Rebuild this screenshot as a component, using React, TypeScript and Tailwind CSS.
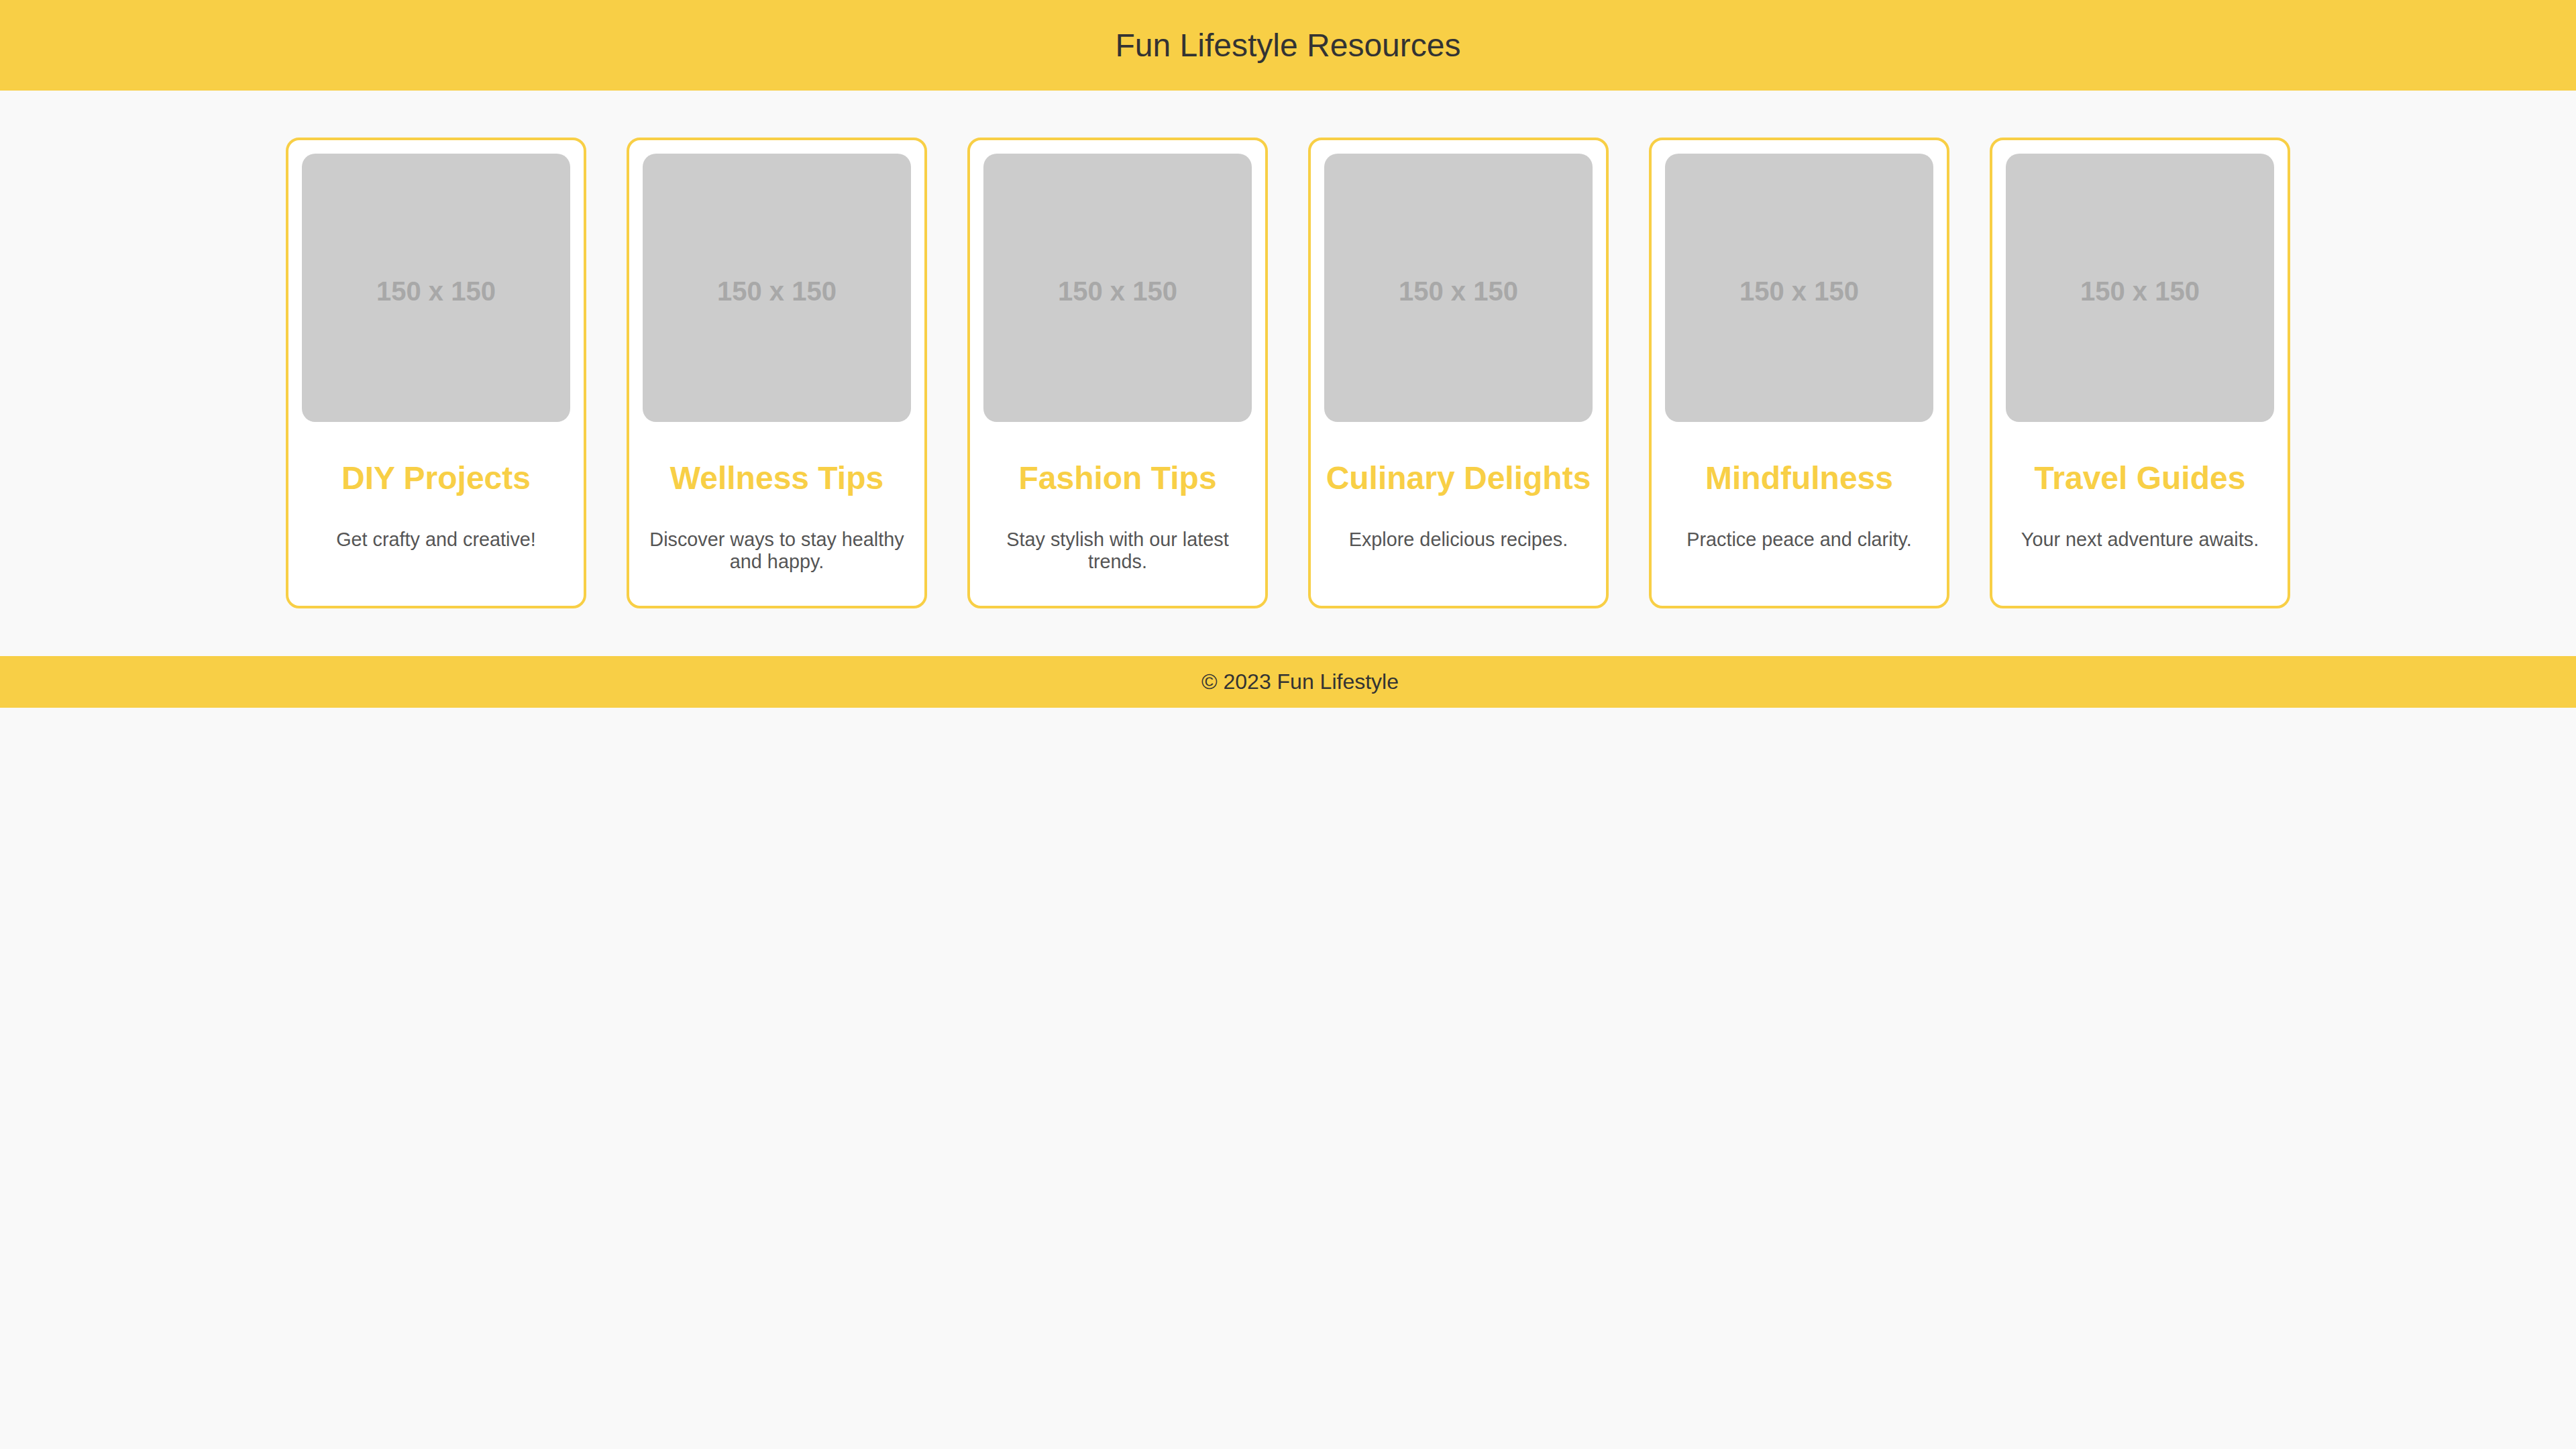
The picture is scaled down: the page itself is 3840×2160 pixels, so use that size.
const resources = [
  { title: 'DIY Projects', text: 'Get crafty and creative!' },
  { title: 'Wellness Tips', text: 'Discover ways to stay healthy and happy.' },
  { title: 'Fashion Tips', text: 'Stay stylish with our latest trends.' },
  { title: 'Culinary Delights', text: 'Explore delicious recipes.' },
  { title: 'Mindfulness', text: 'Practice peace and clarity.' },
  { title: 'Travel Guides', text: 'Your next adventure awaits.' },
];

function ResourceCard({ title, text }: { title: string; text: string }) {
  return (
    <div className="flex flex-col items-center bg-white border-4 border-[#f8cf46] rounded-[20px] px-[20px] pt-[20px] pb-[20px] text-center">
      {/* Placeholder image */}
      <div className="w-[400px] h-[400px] bg-[#cccccc] rounded-[20px] flex items-center justify-center">
        <span className="text-[40px] font-bold text-[#a8a8a8] pt-[10px]">150 x 150</span>
      </div>

      <h3 className="mt-[56px] text-[48px] leading-[55px] font-bold text-[#f8cf46]">{title}</h3>
      <p className="mt-[48px] mb-[29px] text-[28.8px] leading-[33px] text-[#555555]">{text}</p>
    </div>
  );
}

export default function App() {
  return (
    <div className="min-h-screen bg-[#f9f9f9] font-['Liberation_Sans',Arial,sans-serif]">
      <header className="h-[135px] bg-[#f8cf46] flex items-center justify-center">
        <h1 className="text-[48px] text-[#333333]">Fun Lifestyle Resources</h1>
      </header>

      <main className="flex justify-center pt-[70px] pb-[71px]">
        <div className="grid grid-cols-[repeat(6,448px)] gap-[60px]">
          {resources.map((r) => (
            <ResourceCard key={r.title} title={r.title} text={r.text} />
          ))}
        </div>
      </main>

      <footer className="bg-[#f8cf46] py-[20px] pl-[36px] text-center">
        <p className="text-[32px] leading-[37px] text-[#333333]">© 2023 Fun Lifestyle</p>
      </footer>
    </div>
  );
}
